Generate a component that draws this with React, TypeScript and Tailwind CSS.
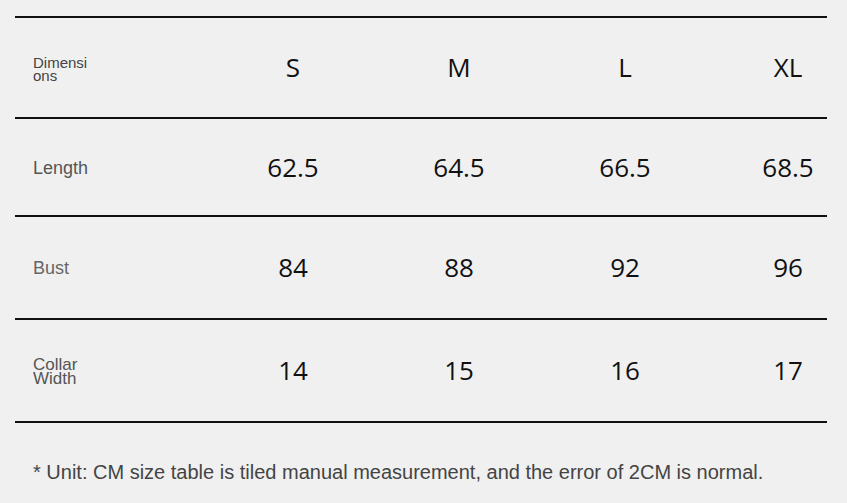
const sizes = ["S", "M", "L", "XL"];

type Row = {
  label: React.ReactNode;
  labelClass: string;
  values: string[];
  height: string;
};

const rows: Row[] = [
  {
    label: (
      <>
        Dimensi
        <br />
        ons
      </>
    ),
    labelClass: "text-[15px] leading-[13px] text-[#444]",
    values: sizes,
    height: "h-[101px]",
  },
  {
    label: "Length",
    labelClass: "text-[18px] text-[#555]",
    values: ["62.5", "64.5", "66.5", "68.5"],
    height: "h-[98px]",
  },
  {
    label: "Bust",
    labelClass: "text-[18px] text-[#666]",
    values: ["84", "88", "92", "96"],
    height: "h-[103px]",
  },
  {
    label: (
      <>
        Collar
        <br />
        Width
      </>
    ),
    labelClass: "text-[17px] leading-[14px] text-[#555]",
    values: ["14", "15", "16", "17"],
    height: "h-[103px]",
  },
];

export default function App() {
  return (
    <div className="min-h-[503px] w-[847px] overflow-hidden bg-[#f0f0f0] pt-[16px]">
      <div className="ml-[15px] w-[812px] border-b-2 border-[#111]">
        {rows.map((row, i) => (
          <div
            key={i}
            className={`flex items-center border-t-2 border-[#111] ${row.height}`}
          >
            <div
              className={`w-[195px] shrink-0 pl-[18px] pt-[2px] font-['Liberation_Sans',Arial,sans-serif] ${row.labelClass}`}
            >
              {row.label}
            </div>
            {row.values.map((v, j) => (
              <div
                key={j}
                className={`${j === 3 ? "w-[160px]" : "w-[166px]"} shrink-0 text-center font-['Open_Sans',sans-serif] text-[26px] font-medium text-[#111]`}
              >
                {v}
              </div>
            ))}
          </div>
        ))}
      </div>
      <p className="mt-[34px] pl-[33px] font-['Liberation_Sans',Arial,sans-serif] text-[20px] text-[#444]">
        * Unit: CM size table is tiled manual measurement, and the error of 2CM is normal.
      </p>
    </div>
  );
}
